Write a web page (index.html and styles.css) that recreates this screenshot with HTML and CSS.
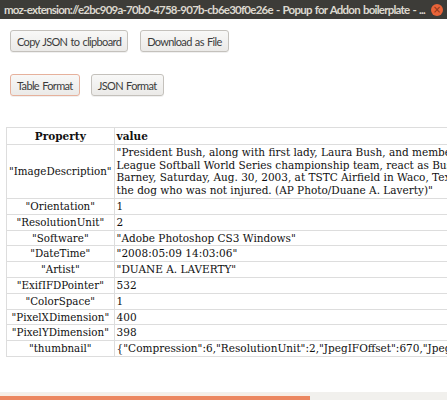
FILE: index.html
```html
<!DOCTYPE html>
<html>
<head>
<meta charset="utf-8">
<link rel="stylesheet" href="styles.css">
</head>
<body>
<div class="titlebar">
  <span class="title">moz-extension://e2bc909a-70b0-4758-907b-cb6e30f0e26e - Popup for Addon boilerplate - ...</span>
  <span class="close">×</span>
</div>
<main class="page">
  <div class="actions">
    <button class="btn">Copy JSON to clipboard</button>
    <button class="btn">Download as File</button>
  </div>
  <div class="actions tabs">
    <button class="btn active">Table Format</button>
    <button class="btn">JSON Format</button>
  </div>
  <table class="exif">
    <thead>
      <tr><th>Property</th><th class="val">value</th></tr>
    </thead>
    <tbody>
      <tr><td class="key">"ImageDescription"</td><td>"President Bush, along with first lady, Laura Bush, and members of the Little League Softball World Series championship team, react as Bush's Scottish terrier Barney, Saturday, Aug. 30, 2003, at TSTC Airfield in Waco, Texas. Bush picked up the dog who was not injured. (AP Photo/Duane A. Laverty)"</td></tr>
      <tr><td class="key">"Orientation"</td><td>1</td></tr>
      <tr><td class="key">"ResolutionUnit"</td><td>2</td></tr>
      <tr><td class="key">"Software"</td><td>"Adobe Photoshop CS3 Windows"</td></tr>
      <tr><td class="key">"DateTime"</td><td>"2008:05:09 14:03:06"</td></tr>
      <tr><td class="key">"Artist"</td><td>"DUANE A. LAVERTY"</td></tr>
      <tr><td class="key">"ExifIFDPointer"</td><td>532</td></tr>
      <tr><td class="key">"ColorSpace"</td><td>1</td></tr>
      <tr><td class="key">"PixelXDimension"</td><td>400</td></tr>
      <tr><td class="key">"PixelYDimension"</td><td>398</td></tr>
      <tr><td class="key">"thumbnail"</td><td>{"Compression":6,"ResolutionUnit":2,"JpegIFOffset":670,"JpegIFByteCount":5432}</td></tr>
    </tbody>
  </table>
</main>
<div class="hscroll"><div class="thumb"></div></div>
</body>
</html>
```

FILE: styles.css
```css
html, body {
  margin: 0;
  padding: 0;
  background: #ffffff;
  overflow: hidden;
}
body {
  width: 447px;
  height: 400px;
}
.titlebar {
  height: 19px;
  background: #3d3c38;
  display: flex;
  align-items: center;
  gap: 2px;
  padding: 0 4px 0 4px;
  box-sizing: border-box;
}
.title {
  flex: 1;
  min-width: 0;
  overflow: hidden;
  font-family: "Lato", sans-serif;
  font-weight: 700;
  font-size: 11.5px;
  letter-spacing: -0.76px;
  word-spacing: 1px;
  color: #dcd8cf;
  white-space: nowrap;
}
.close {
  width: 12px;
  height: 12px;
  border-radius: 50%;
  background: #e9643a;
  color: #8a3417;
  font-family: "DejaVu Sans", sans-serif;
  font-size: 10px;
  line-height: 12px;
  text-align: center;
  flex: none;
}
.page {
  padding: 11px 0 0 6px;
}
.actions {
  display: flex;
  gap: 12px;
  padding-left: 4px;
}
.tabs {
  margin-top: 22px;
  gap: 11px;
}
.btn {
  font-family: "Lato", "DejaVu Sans", sans-serif;
  font-size: 11px;
  letter-spacing: -0.65px;
  word-spacing: 1px;
  color: #3c3c3c;
  height: 22px;
  box-sizing: border-box;
  padding: 0 6px;
  margin: 0;
  border: 1px solid #c4c1bc;
  border-radius: 3px;
  background: linear-gradient(#f8f8f7, #ebeae8);
  box-shadow: 0 1px 0 rgba(0,0,0,0.06);
}
.btn.active {
  border-color: #e6b19c;
}
.exif {
  margin-top: 31px;
  border-collapse: collapse;
  font-family: "DejaVu Serif", serif;
  font-size: 10.5px;
  line-height: 12.8px;
  color: #111;
}
.exif th, .exif td {
  border: 1px solid #dddddd;
  padding: 1px 2px;
  vertical-align: middle;
}
.exif thead th {
  padding: 2px 2px 1px;
}
.exif th {
  font-weight: bold;
  text-align: center;
}
.exif th.val {
  text-align: left;
  width: 436px;
}
.exif td.key {
  font-size: 10.3px;
  text-align: center;
  white-space: nowrap;
}
.hscroll {
  position: fixed;
  left: 0;
  right: 0;
  bottom: 0;
  height: 8px;
  background: #f1f0ed;
}
.thumb {
  position: absolute;
  left: 0;
  bottom: 0;
  width: 310px;
  height: 4px;
  background: #ec8760;
  box-shadow: 0 -3px 0 #f7eee6;
}
```
